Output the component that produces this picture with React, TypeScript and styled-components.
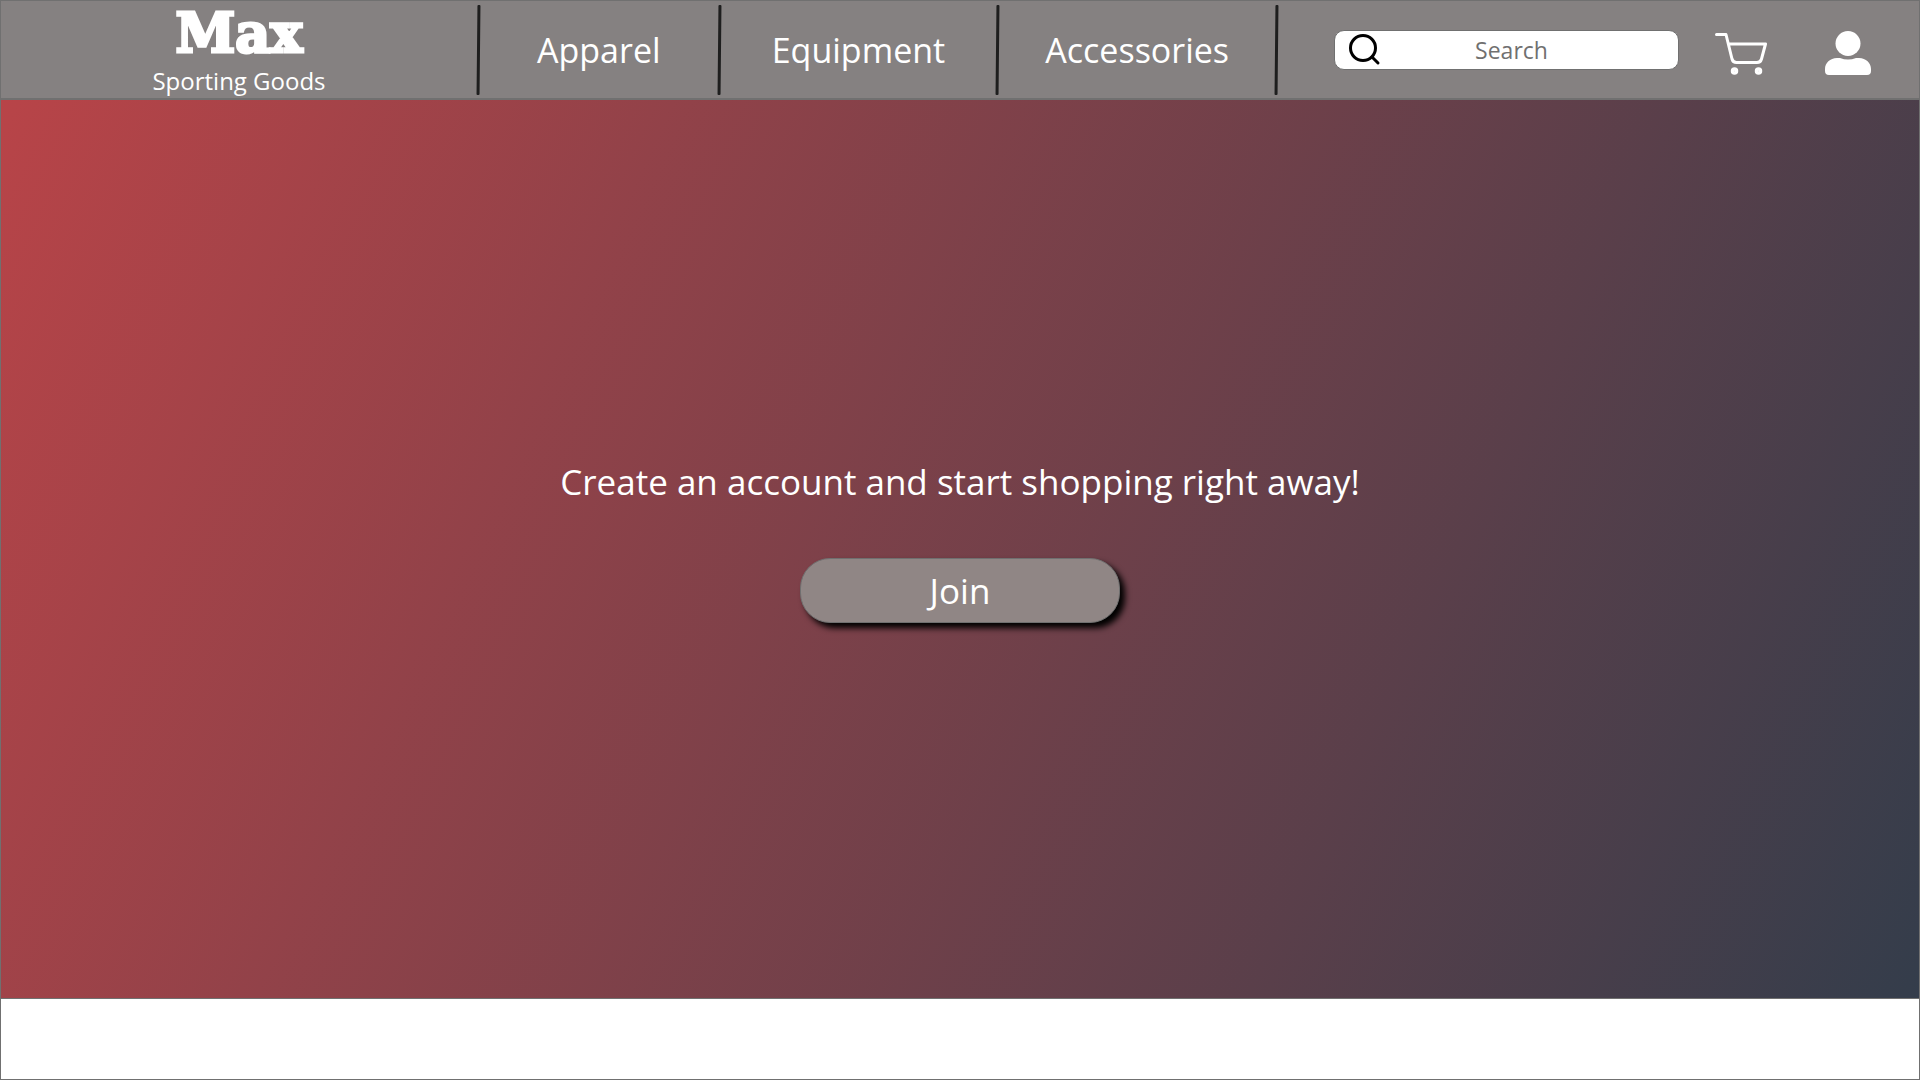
import React, { Fragment } from "react";
import styled, { createGlobalStyle } from "styled-components";

const GlobalStyle = createGlobalStyle`
  *, *::before, *::after { box-sizing: border-box; }
  body {
    margin: 0;
    background: #ffffff;
    font-family: "Open Sans", "Noto Sans", sans-serif;
  }
`;

const Page = styled.div`
  display: flex;
  flex-direction: column;
  min-height: 100vh;
  border: 1px solid #707070;
`;

const Header = styled.header`
  display: grid;
  grid-template-columns: minmax(0, 476fr) minmax(0, 801fr) minmax(0, 641fr);
  align-items: center;
  height: 99px;
  background: #858181;
  border-bottom: 2px solid #707070;
`;

const Brand = styled.a`
  align-self: start;
  display: flex;
  flex-direction: column;
  align-items: center;
  color: #ffffff;
  text-decoration: none;
`;

const BrandName = styled.span`
  font-family: "DejaVu Serif", serif;
  font-size: 54px;
  font-weight: 700;
  line-height: 64px;
  -webkit-text-stroke: 3px #ffffff;
`;

const BrandTagline = styled.span`
  font-size: 24px;
  line-height: 32px;
`;

const Nav = styled.nav`
  display: flex;
  align-items: center;
  height: 90px;
  color: #ffffff;
`;

const NavLink = styled.a<{ $share: number }>`
  flex: ${(p) => p.$share} 1 0;
  color: inherit;
  font-size: 34px;
  line-height: 48px;
  text-align: center;
  text-decoration: none;
`;

const Divider = styled.span`
  flex: none;
  width: 3px;
  height: 90px;
  border-radius: 1px;
  background: #1e1e1e;
  transform: skewX(-0.6deg);
`;

const Tools = styled.div`
  display: flex;
  align-items: center;
  padding: 0 48px 0 56px;
`;

const SearchForm = styled.form`
  flex: 1;
  min-width: 0;
  display: flex;
  align-items: center;
  height: 40px;
  padding: 0 16px 0 14px;
  background: #ffffff;
  border: 1px solid #707070;
  border-radius: 10px;
`;

const SearchInput = styled.input`
  flex: 1;
  min-width: 0;
  padding: 0 20px 0 0;
  border: 0;
  outline: 0;
  background: transparent;
  color: #707070;
  font: inherit;
  font-size: 23px;
  text-align: center;

  &::placeholder { color: #707070; opacity: 1; }
`;

const IconButton = styled.button`
  display: flex;
  margin: 0;
  padding: 0;
  border: 0;
  background: none;
  color: inherit;
  cursor: pointer;
`;

const Actions = styled.div`
  display: flex;
  align-items: flex-end;
  gap: 58px;
  margin-left: 36px;
  padding-top: 6px;
  color: #ffffff;
`;

const Hero = styled.main`
  display: flex;
  flex-direction: column;
  align-items: center;
  justify-content: center;
  gap: 52px;
  height: 899px;
  padding-bottom: 18px;
  border-bottom: 1px solid #707070;
  background: linear-gradient(115deg, #b84448 0%, #343d4b 100%);
  color: #ffffff;
`;

const Headline = styled.h1`
  margin: 0;
  font-size: 35px;
  font-weight: 400;
  line-height: 48px;
`;

const JoinButton = styled.button`
  width: 320px;
  height: 65px;
  padding: 0;
  border: 1px solid #707070;
  border-radius: 30px;
  background: #908685;
  box-shadow: 5px 5px 6px #000000;
  color: #ffffff;
  font: inherit;
  font-size: 35px;
  cursor: pointer;
`;

const SearchIcon = () => (
  <svg width="32" height="32" viewBox="0 0 32 32" fill="none" stroke="#000" strokeWidth="3" strokeLinecap="round" aria-hidden="true">
    <circle cx="14" cy="14" r="12.5" />
    <path d="M23 23l6 6" />
  </svg>
);

const CartIcon = () => (
  <svg width="52" height="42" viewBox="0 0 52 42" fill="none" stroke="currentColor" strokeWidth="3" strokeLinecap="round" strokeLinejoin="round" aria-hidden="true">
    <path d="M1.500 1.500H11L17 26Q18 29.500 21.500 29.500H42Q45.500 29.500 46.500 26L50.500 11H13.500" />
    <circle cx="19.500" cy="38" r="2" strokeWidth="3.500" />
    <circle cx="43.500" cy="38" r="2" strokeWidth="3.500" />
  </svg>
);

const UserIcon = () => (
  <svg width="46" height="44" viewBox="0 0 46 44" fill="currentColor" aria-hidden="true">
    <circle cx="23" cy="12.500" r="12.500" />
    <path d="M12 27H15Q23 30 31 27H34C41 27 46 32 46 38V40Q46 44 42 44H4Q0 44 0 40V38C0 32 5 27 12 27Z" />
  </svg>
);

const links = [
  { label: "Apparel", share: 237 },
  { label: "Equipment", share: 275 },
  { label: "Accessories", share: 275 },
];

export default function App() {
  return (
    <Page>
      <GlobalStyle />
      <Header>
        <Brand href="#">
          <BrandName>Max</BrandName>
          <BrandTagline>Sporting Goods</BrandTagline>
        </Brand>
        <Nav aria-label="Departments">
          <Divider />
          {links.map((link) => (
            <Fragment key={link.label}>
              <NavLink href="#" $share={link.share}>
                {link.label}
              </NavLink>
              <Divider />
            </Fragment>
          ))}
        </Nav>
        <Tools>
          <SearchForm role="search" onSubmit={(e) => e.preventDefault()}>
            <IconButton type="submit" aria-label="Submit search">
              <SearchIcon />
            </IconButton>
            <SearchInput type="text" placeholder="Search" aria-label="Search" />
          </SearchForm>
          <Actions>
            <IconButton type="button" aria-label="Cart">
              <CartIcon />
            </IconButton>
            <IconButton type="button" aria-label="Account">
              <UserIcon />
            </IconButton>
          </Actions>
        </Tools>
      </Header>
      <Hero>
        <Headline>Create an account and start shopping right away!</Headline>
        <JoinButton type="button">Join</JoinButton>
      </Hero>
    </Page>
  );
}
